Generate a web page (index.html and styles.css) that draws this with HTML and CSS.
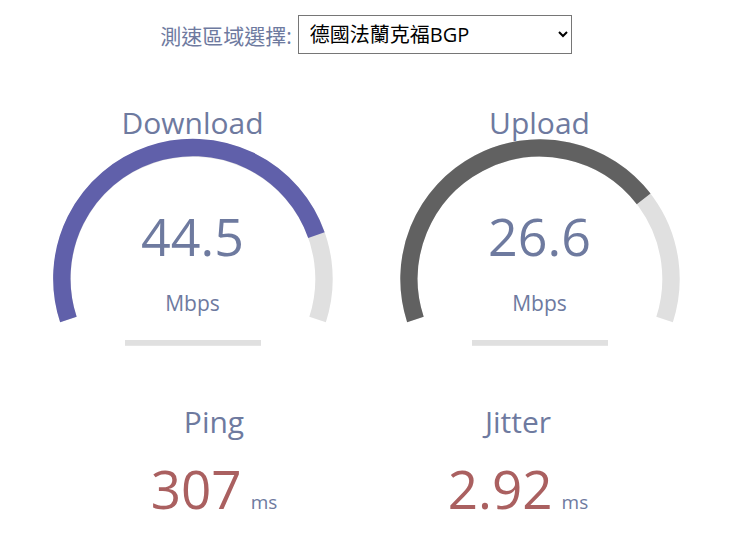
FILE: index.html
```html
<!DOCTYPE html>
<html lang="zh-Hant">
<head>
    <meta charset="UTF-8">
    <meta name="viewport" content="width=device-width, initial-scale=1.0">
    <title>Speedtest</title>
    <link rel="stylesheet" href="styles.css">
</head>
<body>
<div class="page">

    <!-- Server picker -->
    <div class="server">
        <label for="server">測速區域選擇:</label>
        <select id="server" class="server-select">
            <option>德國法蘭克福BGP</option>
        </select>
    </div>

    <!-- Download / Upload meters -->
    <div class="gauges">
        <div class="gauge">
            <svg class="meter" width="340" height="260" viewBox="0 0 340 260">
                <path class="meter-bg" d="M45.41 219.48 A131 131 0 1 1 294.59 219.48"/>
                <path class="meter-dl" d="M45.41 219.48 A131 131 0 0 1 293.42 135.05"/>
                <rect class="meter-bar" x="102" y="240" width="136" height="5.8"/>
            </svg>
            <div class="gauge-text">
                <div class="test-name">Download</div>
                <div class="gauge-value">44.5</div>
                <div class="gauge-unit">Mbps</div>
            </div>
        </div>
        <div class="gauge">
            <svg class="meter" width="340" height="260" viewBox="0 0 340 260">
                <path class="meter-bg" d="M45.41 219.48 A131 131 0 1 1 294.59 219.48"/>
                <path class="meter-ul" d="M45.41 219.48 A131 131 0 0 1 273.65 98.9"/>
                <rect class="meter-bar" x="102" y="240" width="136" height="5.8"/>
            </svg>
            <div class="gauge-text">
                <div class="test-name">Upload</div>
                <div class="gauge-value">26.6</div>
                <div class="gauge-unit">Mbps</div>
            </div>
        </div>
    </div>

    <!-- Ping / Jitter -->
    <div class="stats">
        <div class="stat">
            <div class="test-name">Ping</div>
            <div class="stat-value">307<span class="stat-unit">ms</span></div>
        </div>
        <div class="stat">
            <div class="test-name">Jitter</div>
            <div class="stat-value">2.92<span class="stat-unit">ms</span></div>
        </div>
    </div>

</div>
</body>
</html>
```

FILE: styles.css
```css
body {
    margin: 0;
    font-family: "Open Sans", "Noto Sans CJK TC", sans-serif;
    color: #6e7a9f;
    background: #fff;
}
.page {
    width: 732px;
    text-align: center;
}
.server {
    display: flex;
    justify-content: center;
    align-items: center;
    gap: 6px;
    padding-top: 15px;
    height: 39px;
}
.server label {
    font-size: 21px;
    color: #6e7a9f;
}
.server-select {
    width: 274px;
    height: 39px;
    font-family: "Open Sans", "Noto Sans CJK TC", sans-serif;
    font-size: 20px;
    color: #000;
    background: #fff;
    border: 1px solid #767676;
    border-radius: 0;
    padding: 0 0 0 7px;
}
.gauges {
    display: flex;
    justify-content: center;
    gap: 7px;
    margin-top: 46px;
}
.gauge {
    width: 340px;
    height: 260px;
    display: grid;
}
.gauge > * {
    grid-area: 1 / 1;
}
.meter path {
    fill: none;
    stroke-width: 17.4;
}
.meter-bg {
    stroke: #e0e0e0;
}
.meter-dl {
    stroke: #6060aa;
}
.meter-ul {
    stroke: #616161;
}
.meter-bar {
    fill: #e0e0e0;
}
.gauge-text {
    display: flex;
    flex-direction: column;
    align-items: center;
}
.gauge .test-name {
    padding-top: 3px;
}
.test-name {
    font-size: 30px;
    line-height: 40px;
    padding-top: 1px;
}
.gauge-value {
    font-size: 52px;
    line-height: 60px;
    margin-top: 63px;
}
.gauge-unit {
    font-size: 21px;
    line-height: 28px;
    margin-top: 23px;
}
.stats {
    display: flex;
    justify-content: center;
    margin-top: 41px;
}
.stat {
    width: 304px;
}
.stat-value {
    font-size: 53px;
    line-height: 64px;
    margin-top: 15px;
    color: #aa6060;
}
.stat-unit {
    font-size: 19px;
    margin-left: 9px;
    color: #6e7a9f;
}
```
